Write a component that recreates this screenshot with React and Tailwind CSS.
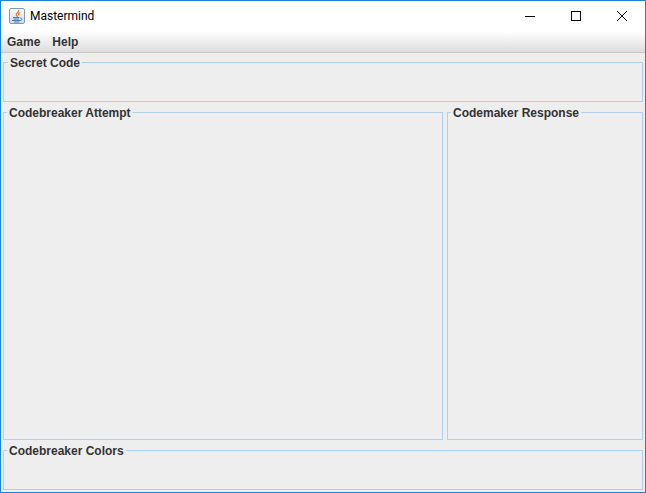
export default function App() {
  const legend = "px-[2px] h-[15px] text-[12px] leading-[17px] font-bold text-[#333333]";
  const box = "border border-[#aecfee] min-w-0";
  return (
    <div className="w-[646px] h-[493px] border border-[#1883d7] bg-[#eeeeee] flex flex-col overflow-hidden font-['Liberation_Sans',Arial,sans-serif]">
      <div className="h-[30px] shrink-0 bg-white flex items-center">
        <svg className="ml-[8px] w-[16px] h-[16px] shrink-0" viewBox="0 0 16 16">
          <defs>
            <linearGradient id="g" x1="0" y1="0" x2="0" y2="1">
              <stop offset="0" stopColor="#f7f9fb" />
              <stop offset="1" stopColor="#cfdcea" />
            </linearGradient>
          </defs>
          <rect x="0.5" y="0.5" width="15" height="15" rx="1.5" fill="url(#g)" stroke="#7a9ab8" />
          <path d="M9.5 2C11 3.8 6.8 5 7.3 7C7.6 8 8.8 8 8.4 9M11 4.5C9.4 5.4 9.2 6.2 10.2 7.4" fill="none" stroke="#ea7a22" strokeWidth="1.3" />
          <path d="M4 9.5H10.5M4.5 11H10M3 12.5H11.5C13.4 12.5 13.4 9.8 11 10M5 14H10.5" fill="none" stroke="#4a7fae" strokeWidth="1" />
        </svg>
        <span className="ml-[5px] text-[12px] text-black font-['Roboto',sans-serif]">Mastermind</span>
        <div className="ml-auto flex items-center h-full">
          <div className="w-[46px] h-full flex items-center justify-center">
            <svg width="12" height="12" viewBox="0 0 12 12"><path d="M1 6.5H11" stroke="#000" /></svg>
          </div>
          <div className="w-[46px] h-full flex items-center justify-center">
            <svg width="12" height="12" viewBox="0 0 12 12"><rect x="1.5" y="1.5" width="9" height="9" fill="none" stroke="#000" /></svg>
          </div>
          <div className="w-[46px] h-full flex items-center justify-center">
            <svg width="12" height="12" viewBox="0 0 12 12"><path d="M1 1L11 11M11 1L1 11" stroke="#000" /></svg>
          </div>
        </div>
      </div>
      <div className="h-[22px] shrink-0 bg-gradient-to-b from-white to-[#dddddd] border-b border-[#c8c8c8] flex items-center pl-[6px] pt-[1px] gap-[12px] text-[12px] font-bold text-[#333333]">
        <span>Game</span>
        <span>Help</span>
      </div>
      <div className="flex-1 flex flex-col px-[2px] pt-[2px] pb-[2px] gap-[3px] min-h-0">
        <fieldset className={`${box} h-[47px] shrink-0`}>
          <legend className={`${legend} ml-[4px]`}>Secret Code</legend>
        </fieldset>
        <div className="flex-1 flex gap-[4px] min-h-0">
          <fieldset className={`${box} w-[440px] shrink-0`}>
            <legend className={`${legend} ml-[3px]`}>Codebreaker Attempt</legend>
          </fieldset>
          <fieldset className={`${box} flex-1`}>
            <legend className={`${legend} ml-[3px]`}>Codemaker Response</legend>
          </fieldset>
        </div>
        <fieldset className={`${box} h-[47px] shrink-0`}>
          <legend className={`${legend} ml-[3px]`}>Codebreaker Colors</legend>
        </fieldset>
      </div>
    </div>
  );
}
